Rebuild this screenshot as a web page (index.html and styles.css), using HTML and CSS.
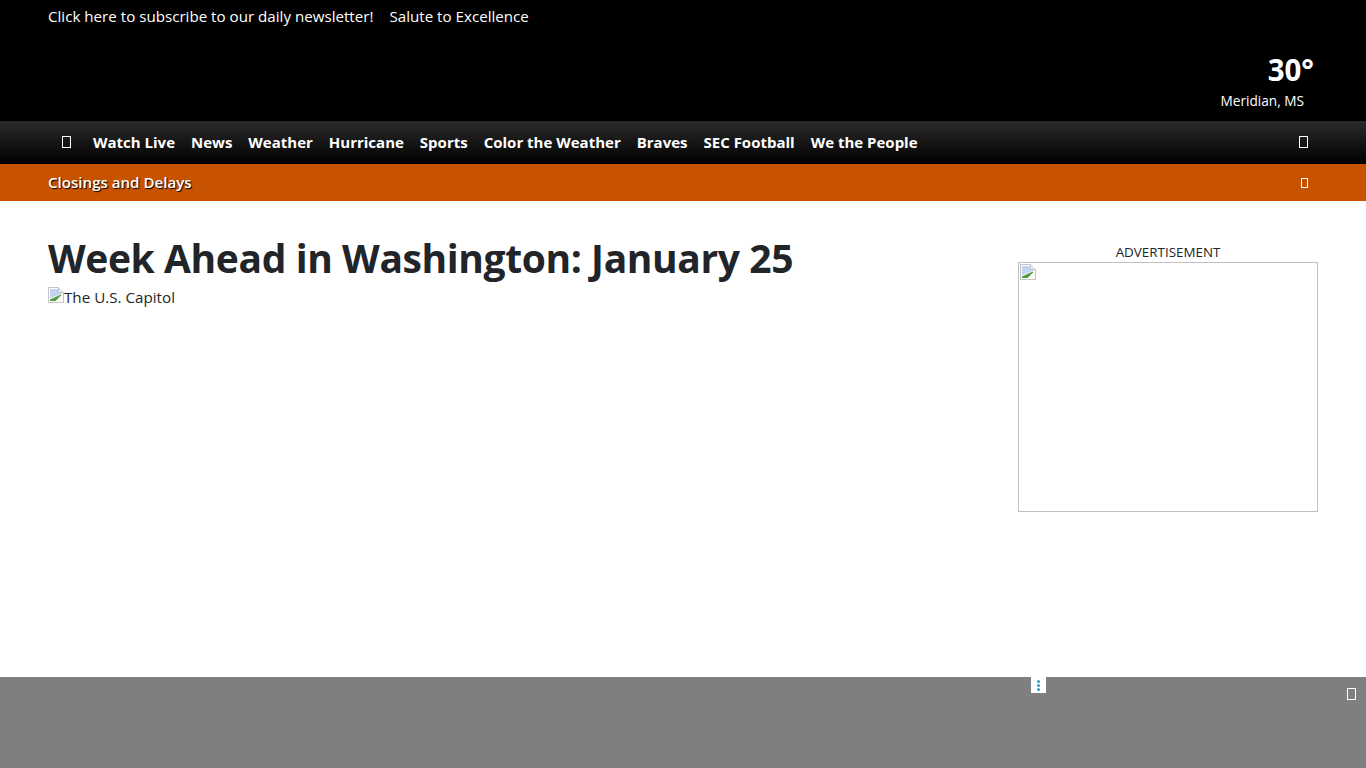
FILE: index.html
```html
<!DOCTYPE html>
<html lang="en">
<head>
<meta charset="utf-8">
<title>Week Ahead in Washington: January 25</title>
<link rel="stylesheet" href="styles.css">
</head>
<body>
<header class="top">
  <div class="top-links">
    <a>Click here to subscribe to our daily newsletter!</a>
    <a>Salute to Excellence</a>
  </div>
  <div class="weather">
    <div class="temp">30°</div>
    <div class="place">Meridian, MS</div>
  </div>
</header>
<nav class="nav">
  <span class="tofu nav-home"></span>
  <a>Watch Live</a>
  <a>News</a>
  <a>Weather</a>
  <a>Hurricane</a>
  <a>Sports</a>
  <a>Color the Weather</a>
  <a>Braves</a>
  <a>SEC Football</a>
  <a>We the People</a>
  <span class="tofu nav-search"></span>
</nav>
<div class="alert">
  <span class="alert-text">Closings and Delays</span>
  <span class="tofu alert-close"></span>
</div>
<main class="main">
  <article class="story">
    <h1>Week Ahead in Washington: January 25</h1>
    <div class="broken">
      <svg class="broken-icon" viewBox="0 0 16 16"><path d="M.5 .5H10.500L15.500 5.500V15.500H.5Z" fill="#fff" stroke="#c4c4c4"/><path d="M2 2H10V6H14V6.500L2 11.500Z" fill="#c3d4f2"/><path d="M2 14V12.500L13 7.500V8.500L7.500 14Z" fill="#4c9a3c"/><path d="M10.500 .5V5.500H15.500" fill="#eee" stroke="#c4c4c4"/></svg>
      <span>The U.S. Capitol</span>
    </div>
  </article>
  <aside class="ad">
    <div class="ad-label">ADVERTISEMENT</div>
    <div class="ad-box">
      <svg class="broken-icon" viewBox="0 0 16 16"><path d="M.5 .5H10.500L15.500 5.500V15.500H.5Z" fill="#fff" stroke="#c4c4c4"/><path d="M2 2H10V6H14V6.500L2 11.500Z" fill="#c3d4f2"/><path d="M2 14V12.500L13 7.500V8.500L7.500 14Z" fill="#4c9a3c"/><path d="M10.500 .5V5.500H15.500" fill="#eee" stroke="#c4c4c4"/></svg>
    </div>
  </aside>
</main>
<div class="bottom">
  <span class="dots"><i></i><i></i><i></i></span>
  <span class="tofu bottom-close"></span>
</div>
</body>
</html>
```

FILE: styles.css
```css
* { box-sizing: border-box; }
html, body { margin: 0; height: 768px; overflow: hidden; }
body { font-family: "Open Sans", "Noto Sans", sans-serif; color: #212529; background: #fff; position: relative; }
.tofu { display: block; width: 9px; height: 12px; border: 1px solid #fff; flex: none; }
.top { height: 121px; background: #000; color: #fff; padding: 5px 52px 0 48px; position: relative; }
.top-links { display: flex; gap: 16px; font-size: 15.150px; line-height: 22px; }
.weather { position: absolute; top: 51px; right: 52px; text-align: right; width: 110px; }
.temp { font-size: 29.500px; font-weight: 700; line-height: 38px; }
.place { font-size: 13.650px; line-height: 18px; margin-top: 3px; margin-right: 10px; white-space: nowrap; }
.nav { height: 43px; display: flex; align-items: center; padding: 0 58px 2px 62px; background: linear-gradient(#2b2b2b, #000); color: #fff; font-size: 15px; font-weight: 700; gap: 16px; }
.nav-home { margin-right: 6px; }
.nav-search { margin-left: auto; }
.alert { height: 37px; background: #c75300; color: #fff; display: flex; align-items: center; justify-content: space-between; padding: 0 58px 2px 48px; }
.alert-text { font-size: 15.100px; font-weight: 600; text-shadow: 1px 1px 1px #000; }
.alert-close { width: 7px; height: 10px; margin-top: 2px; }
.main { display: flex; justify-content: space-between; padding: 0 48px; }
.story { padding-top: 33px; }
h1 { margin: 0; font-size: 39px; font-weight: 700; line-height: 48px; letter-spacing: -.4px; }
.broken { display: flex; align-items: flex-start; margin-top: 4px; font-size: 15.200px; line-height: 22px; }
.broken-icon { width: 16px; height: 16px; display: block; flex: none; }
.broken .broken-icon { margin-top: 1px; }
.ad { width: 300px; padding-top: 41px; text-align: center; }
.ad-label { font-size: 13.400px; line-height: 20px; }
.ad-box { width: 300px; height: 250px; border: 1px solid #c0c0c0; padding: 1px; }
.bottom { position: absolute; left: 0; right: 0; bottom: 0; height: 91px; background: #7f7f7f; }
.dots { position: absolute; left: 1031px; top: 0; width: 15px; height: 16px; background: #fff; display: flex; flex-direction: column; align-items: center; justify-content: center; gap: 1px; }
.dots i { display: block; width: 3px; height: 3px; border-radius: 50%; background: #2a9fc0; }
.bottom-close { position: absolute; left: 1347px; top: 11px; width: 9px; height: 12px; }
```
